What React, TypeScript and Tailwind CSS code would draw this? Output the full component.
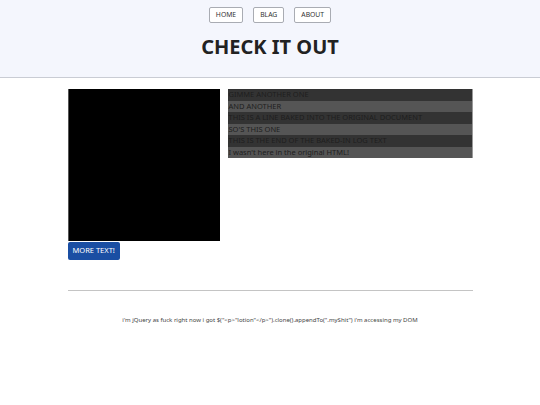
const logLines = [
  { text: 'GIMME ANOTHER ONE', dark: true },
  { text: 'AND ANOTHER', dark: false },
  { text: 'THIS IS A LINE BAKED INTO THE ORIGINAL DOCUMENT', dark: true },
  { text: "SO'S THIS ONE", dark: false },
  { text: 'THIS IS THE END OF THE BAKED-IN LOG TEXT', dark: true },
  { text: "I wasn't here in the original HTML!", dark: false },
];

const App = () => {
  return (
    <div className="min-h-[405px] bg-white font-['Noto_Sans',sans-serif] text-[#222]">
      {/* Header */}
      <header className="h-[78px] border-b border-[#c9ccd4] bg-[#f4f6fd] pt-[7px]">
        <nav className="flex justify-center gap-[10px]">
          {['HOME', 'BLAG', 'ABOUT'].map((item) => (
            <button
              key={item}
              className="h-[16px] rounded-[2px] border border-[#a9acb3] bg-white px-[6px] text-[6.8px] font-normal leading-none text-[#333]"
            >
              {item}
            </button>
          ))}
        </nav>
        <h1 className="mt-[11px] text-center text-[20px] font-bold leading-[26px] text-[#222]">
          CHECK IT OUT
        </h1>
      </header>

      {/* Main */}
      <main className="mx-auto mt-[11px] w-[405px]">
        <div className="flex gap-[8px]">
          <div className="h-[152px] w-[152px] shrink-0 border-l border-[#555] bg-black" />
          <div className="h-fit flex-1 border-r border-[#999]">
            {logLines.map((line) => (
              <div
                key={line.text}
                className={`h-[11.5px] pl-[1px] text-[7.5px] leading-[11.5px] text-[#1e1e1e] ${
                  line.dark ? 'bg-[#333]' : 'bg-[#555]'
                }`}
              >
                {line.text}
              </div>
            ))}
          </div>
        </div>
        <button className="mt-[1px] block h-[18px] rounded-[2px] bg-[#1a4ea3] px-[5px] text-[7.5px] font-normal leading-none text-white">
          MORE TEXT!
        </button>
        <hr className="mt-[30px] border-t border-[#c4c4c4]" />
      </main>

      {/* Footer */}
      <footer className="mt-[25px] text-center text-[6px] text-[#444]">
        i'm jQuery as fuck right now i got $("&lt;p&gt;"lotion"&lt;/p&gt;").clone().appendTo(".myShit") i'm accessing my DOM
      </footer>
    </div>
  );
};

export default App;
